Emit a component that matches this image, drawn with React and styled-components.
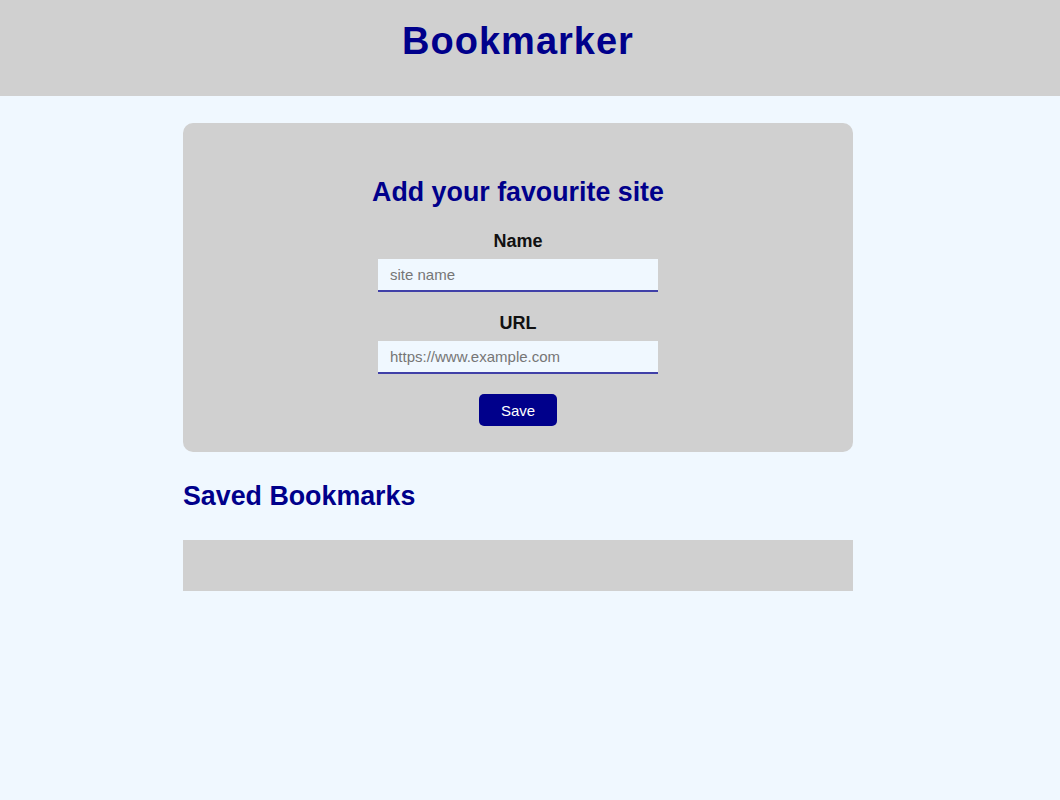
import React from "react";
import styled, { createGlobalStyle } from "styled-components";

const Global = createGlobalStyle`
  html, body { margin: 0; padding: 0; }
  body {
    background: #f0f8ff;
    font-family: "Liberation Sans", Arial, sans-serif;
    min-height: 800px;
  }
  * { box-sizing: border-box; }
`;

const Page = styled.div`
  padding-right: 24px;
`;

const Header = styled.header`
  height: 96px;
  margin-right: -24px;
  padding-right: 24px;
  background: #d0d0d0;
  display: flex;
  align-items: center;
  justify-content: center;
`;

const Title = styled.h1`
  margin: 0;
  color: #00008b;
  font-size: 38px;
  font-weight: 700;
  letter-spacing: 1px;
  line-height: 1;
  transform: translateY(-7px);
`;

const Main = styled.main`
  width: 670px;
  margin: 27px auto 0;
  display: flex;
  flex-direction: column;
`;

const Card = styled.section`
  background: #d0d0d0;
  border-radius: 10px;
  padding: 53px 0 26px;
  display: flex;
  flex-direction: column;
  align-items: center;
`;

const CardTitle = styled.h2`
  margin: 0 0 22px;
  color: #00008b;
  font-size: 26.8px;
  font-weight: 700;
  line-height: 32px;
`;

const Label = styled.label`
  font-size: 18px;
  font-weight: 700;
  color: #111;
  line-height: 22px;
  margin-bottom: 7px;
`;

const Input = styled.input`
  width: 280px;
  height: 33px;
  border: none;
  border-bottom: 2px solid #4040a8;
  background: #f0f8ff;
  padding: 0 12px;
  font-family: "Liberation Sans", Arial, sans-serif;
  font-size: 15px;
  color: #333;
  margin-bottom: ${(p) => p.$mb || 0}px;
  outline: none;
  &::placeholder { color: #767676; }
`;

const Button = styled.button`
  width: 78px;
  height: 32px;
  border: none;
  border-radius: 5px;
  background: #00008b;
  color: #fff;
  font-family: "Liberation Sans", Arial, sans-serif;
  font-size: 15px;
  cursor: pointer;
`;

const SectionTitle = styled.h2`
  margin: 28px 0 28px;
  color: #00008b;
  font-size: 26.8px;
  font-weight: 700;
  line-height: 32px;
`;

const List = styled.div`
  height: 51px;
  background: #d0d0d0;
`;

export default function App() {
  return (
    <Page>
      <Global />
      <Header>
        <Title>Bookmarker</Title>
      </Header>
      <Main>
        <Card>
          <CardTitle>Add your favourite site</CardTitle>
          <Label htmlFor="name">Name</Label>
          <Input id="name" placeholder="site name" $mb={20} />
          <Label htmlFor="url">URL</Label>
          <Input id="url" placeholder="https://www.example.com" $mb={20} />
          <Button>Save</Button>
        </Card>
        <SectionTitle>Saved Bookmarks</SectionTitle>
        <List />
      </Main>
    </Page>
  );
}
